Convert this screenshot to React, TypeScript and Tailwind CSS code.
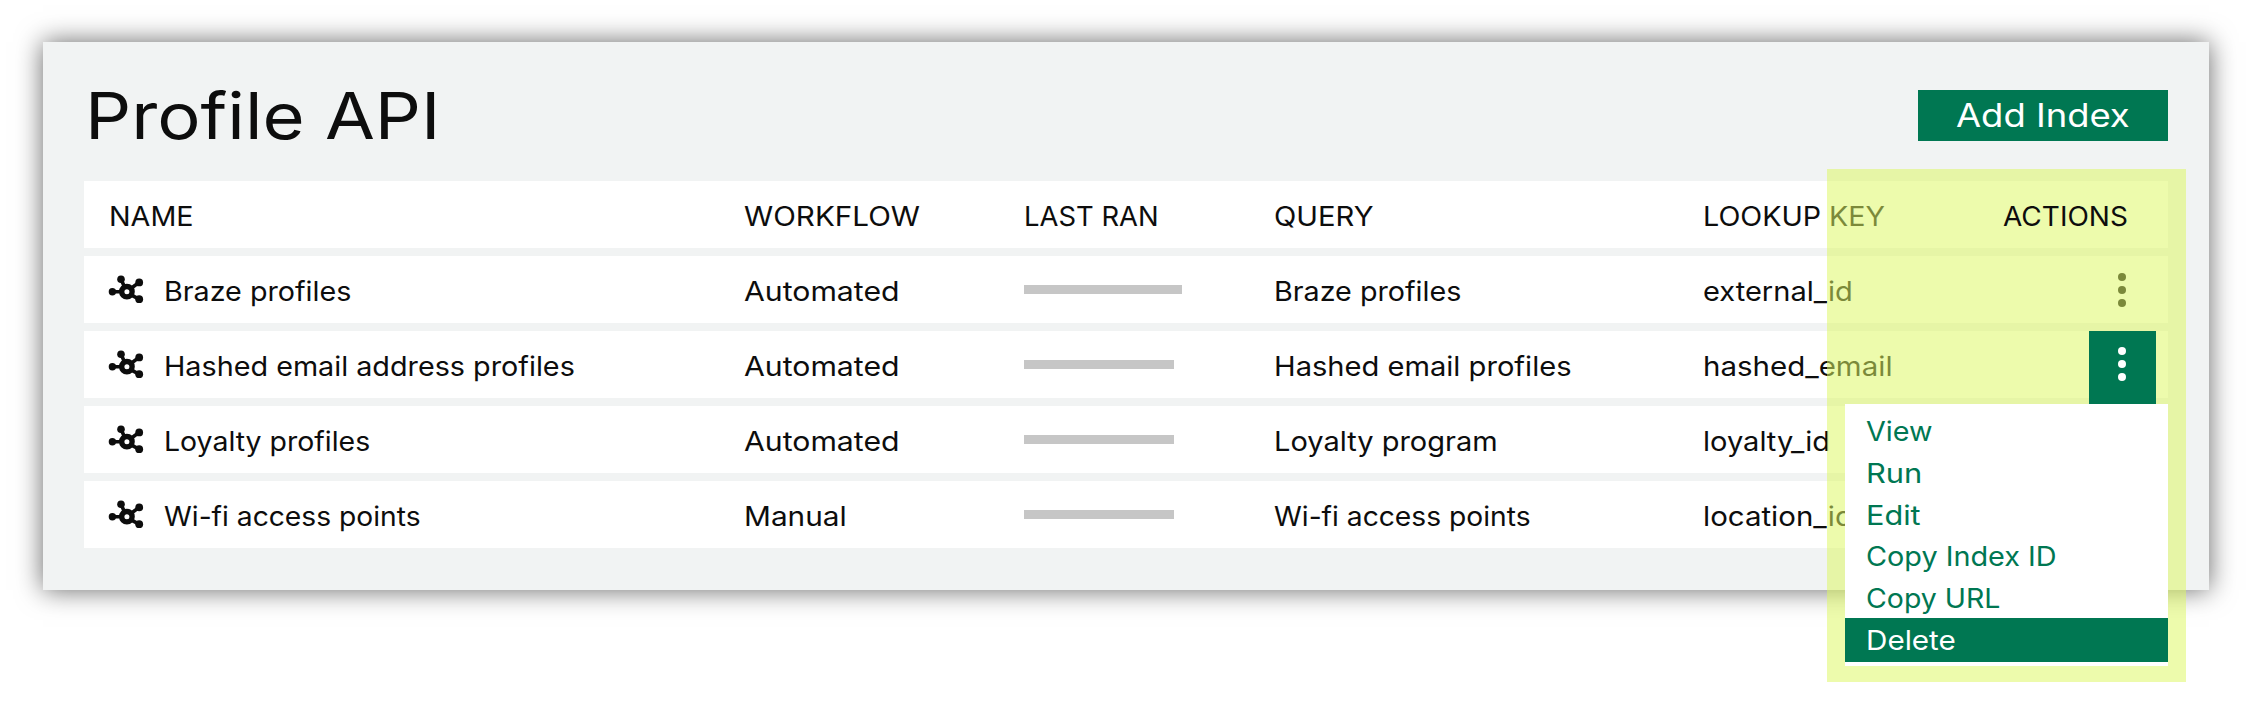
import { useLayoutEffect, useRef, useState } from "react";

type IndexRow = {
  name: [string, number];
  workflow: [string, number];
  bar: string;
  query: [string, number];
  lookup: [string, number];
  active?: boolean;
};

const rows: IndexRow[] = [
  { name: ["Braze profiles", 187], workflow: ["Automated", 155.5], bar: "w-[158px]", query: ["Braze profiles", 187], lookup: ["external_id", 149.5] },
  { name: ["Hashed email address profiles", 411], workflow: ["Automated", 155.5], bar: "w-[150px]", query: ["Hashed email profiles", 297.5], lookup: ["hashed_email", 190], active: true },
  { name: ["Loyalty profiles", 206.5], workflow: ["Automated", 155.5], bar: "w-[150px]", query: ["Loyalty program", 223.5], lookup: ["loyalty_id", 127] },
  { name: ["Wi-fi access points", 257], workflow: ["Manual", 102.5], bar: "w-[150px]", query: ["Wi-fi access points", 257], lookup: ["location_id", 149.5] },
];

const menuItems: [string, number][] = [
  ["View", 67],
  ["Run", 56],
  ["Edit", 54.5],
  ["Copy Index ID", 191],
  ["Copy URL", 134],
];

const columns = "grid grid-cols-[636px_280px_250px_429px_299px_1fr]";

/* Stretches a single line of text to a given width. */
function Fit({ text, width }: { text: string; width: number }) {
  const ref = useRef<HTMLSpanElement>(null);
  const [scale, setScale] = useState(1);
  useLayoutEffect(() => {
    if (ref.current) setScale(width / ref.current.offsetWidth);
  }, [width]);
  return (
    <span className="block text-left" style={{ width }}>
      <span ref={ref} className="inline-block origin-left whitespace-nowrap" style={{ transform: `scaleX(${scale})` }}>
        {text}
      </span>
    </span>
  );
}

function HubIcon() {
  return (
    <svg className="h-[31px] w-9 shrink-0 text-[#0d0d0d]" viewBox="0 0 36 31" fill="none" stroke="currentColor">
      <path d="M4.8 16.8H14M13 4.2l3.8 8.4M31 7.4l-8.4 6.4M31 24.2l-8.4-4.6" strokeWidth="3.6" />
      <circle cx="18.9" cy="16.7" r="5.2" strokeWidth="5.4" />
      <g fill="currentColor" stroke="none">
        <circle cx="4.4" cy="16.8" r="3.7" />
        <circle cx="13" cy="4.2" r="3.8" />
        <circle cx="31.2" cy="7.4" r="3.9" />
        <circle cx="31.2" cy="24.2" r="3.9" />
      </g>
    </svg>
  );
}

function Dots({ className }: { className: string }) {
  return (
    <svg className={`h-[34px] w-2 ${className}`} viewBox="0 0 8 34" fill="currentColor">
      <circle cx="4" cy="4" r="4" />
      <circle cx="4" cy="17" r="4" />
      <circle cx="4" cy="30" r="4" />
    </svg>
  );
}

export default function App() {
  return (
    <div className="h-[719px] w-[2251px] overflow-hidden bg-white pl-[42.5px] pt-[42px] font-['Inter',sans-serif] text-[27px] leading-[34px] text-[#0d0d0d]">
      <main className="relative h-[547.5px] w-[2166.5px] bg-[#f1f3f3] pl-[41.5px] pr-[41px] shadow-[0_0_25px_rgba(0,0,0,0.6)]">
        <header className="flex h-[139px] items-start justify-between">
          <h1 className="pl-px pt-[35px] text-[64px] leading-[78px]">
            <Fit text="Profile API" width={356} />
          </h1>
          <button className="mt-[48.3px] flex h-[50.5px] w-[250.5px] items-center justify-center bg-[#007752] pt-px text-[32px] text-white">
            <Fit text="Add Index" width={174} />
          </button>
        </header>

        <section className="flex flex-col gap-2">
          <div className={`${columns} h-[67px] items-center bg-white pl-6 pt-[5px]`}>
            <div className="pl-px">
              <Fit text="NAME" width={85} />
            </div>
            <Fit text="WORKFLOW" width={175.5} />
            <Fit text="LAST RAN" width={135} />
            <Fit text="QUERY" width={99.5} />
            <Fit text="LOOKUP KEY" width={182.5} />
          </div>
          {rows.map((row) => (
            <div key={row.name[0]} className={`${columns} h-[67px] items-center bg-white pl-6 pt-[5px]`}>
              <div className="flex items-center gap-5">
                <div className="pb-[3px]">
                  <HubIcon />
                </div>
                <Fit text={row.name[0]} width={row.name[1]} />
              </div>
              <Fit text={row.workflow[0]} width={row.workflow[1]} />
              <div className={`mb-[5.5px] h-[8.7px] bg-[#c6c6c6] ${row.bar}`} />
              <Fit text={row.query[0]} width={row.query[1]} />
              <Fit text={row.lookup[0]} width={row.lookup[1]} />
              <div className="flex justify-end pb-[5px] pr-[42px]">
                {!row.active && <Dots className="text-[#0d0d0d]" />}
              </div>
            </div>
          ))}
        </section>

        <aside className="absolute left-[1784.5px] top-[127px] h-[512.7px] w-[358.5px]">
          <div className="absolute inset-0 bg-[rgba(221,247,98,0.53)]" />
          <div className="relative flex h-full flex-col items-end pr-[17.5px] pt-3">
            <div className="flex h-[67px] items-center pr-[41px] pt-[5px]">
              <Fit text="ACTIONS" width={124.5} />
            </div>
            <div className="mr-3 mt-[82.5px] flex h-[73px] w-[67px] justify-center bg-[#007752] pr-px pt-4">
              <Dots className="text-white" />
            </div>
            <div className="flex h-[262.7px] w-[323px] flex-col bg-white pt-[6.6px] text-[#007752]">
              {menuItems.map(([label, width]) => (
                <div key={label} className="flex h-[41.6px] items-center pl-[21px] pt-[3px]">
                  <Fit text={label} width={width} />
                </div>
              ))}
              <div className="flex h-11 items-center bg-[#007752] pl-[21px] pt-0.5 text-white">
                <Fit text="Delete" width={90} />
              </div>
            </div>
          </div>
        </aside>
      </main>
    </div>
  );
}
